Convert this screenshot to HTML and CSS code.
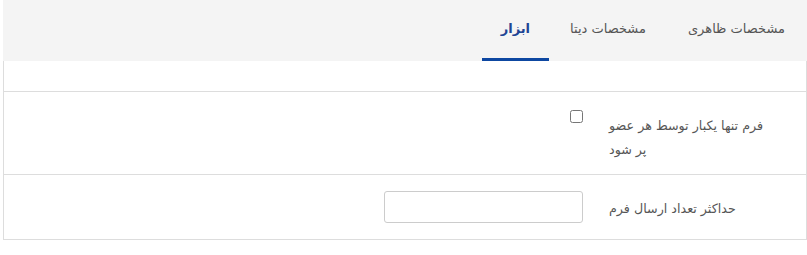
FILE: index.html
```html
<!DOCTYPE html>
<html lang="fa" dir="rtl">
<head>
<meta charset="utf-8">
<link rel="stylesheet" href="styles.css">
</head>
<body>
<div class="panel">
  <ul class="tabs">
    <li class="tab">مشخصات ظاهری</li>
    <li class="tab">مشخصات دیتا</li>
    <li class="tab active">ابزار</li>
  </ul>
  <div class="content">
    <div class="row empty"></div>
    <div class="row row-check">
      <label class="label">فرم تنها یکبار توسط هر عضو پر شود</label>
      <div class="control"><input type="checkbox" class="check"></div>
    </div>
    <div class="row row-input">
      <label class="label">حداکثر تعداد ارسال فرم</label>
      <div class="control"><input type="text" class="text-input"></div>
    </div>
  </div>
</div>
</body>
</html>
```
FILE: styles.css
```css
html, body {
  margin: 0;
  padding: 0;
  background: #fff;
}
body {
  font-family: "DejaVu Sans", "Noto Sans", sans-serif;
  font-size: 13px;
  color: #555;
}
.panel {
  margin-left: 2px;
  width: 804px;
}
.tabs {
  list-style: none;
  margin: 0;
  padding: 0 1px 0 3px;
  height: 61px;
  background: #f4f4f4;
  display: flex;
  align-items: stretch;
}
.tab {
  padding: 0 21px;
  display: flex;
  align-items: center;
  padding-bottom: 2px;
  border-bottom: 3px solid transparent;
  box-sizing: border-box;
  color: #555;
}
.tab.active {
  padding: 0 19px 2px;
  color: #1f4594;
  font-weight: bold;
  border-bottom-color: #0d47a1;
}
.content {
  border: 1px solid #ddd;
  border-top: none;
}
.row {
  display: flex;
  align-items: flex-start;
  gap: 26px;
  padding-right: 38px;
  border-bottom: 1px solid #ddd;
}
.row:last-child {
  border-bottom: none;
}
.row.empty {
  height: 30px;
}
.label {
  width: 159px;
  font-size: 12.7px;
  line-height: 24px;
  flex: none;
  text-align: left;
}
.row-check {
  height: 82px;
}
.row-check .label {
  padding-top: 22px;
}
.row-check .control {
  padding-top: 18px;
}
.check {
  margin: 0;
  width: 13px;
  height: 13px;
}
.row-input {
  height: 64px;
}
.row-input .label {
  padding-top: 22px;
}
.row-input .control {
  padding-top: 16px;
}
.text-input {
  margin: 0;
  width: 199px;
  height: 32px;
  box-sizing: border-box;
  border: 1px solid #ccc;
  border-radius: 3px;
  background: #fff;
}
```
